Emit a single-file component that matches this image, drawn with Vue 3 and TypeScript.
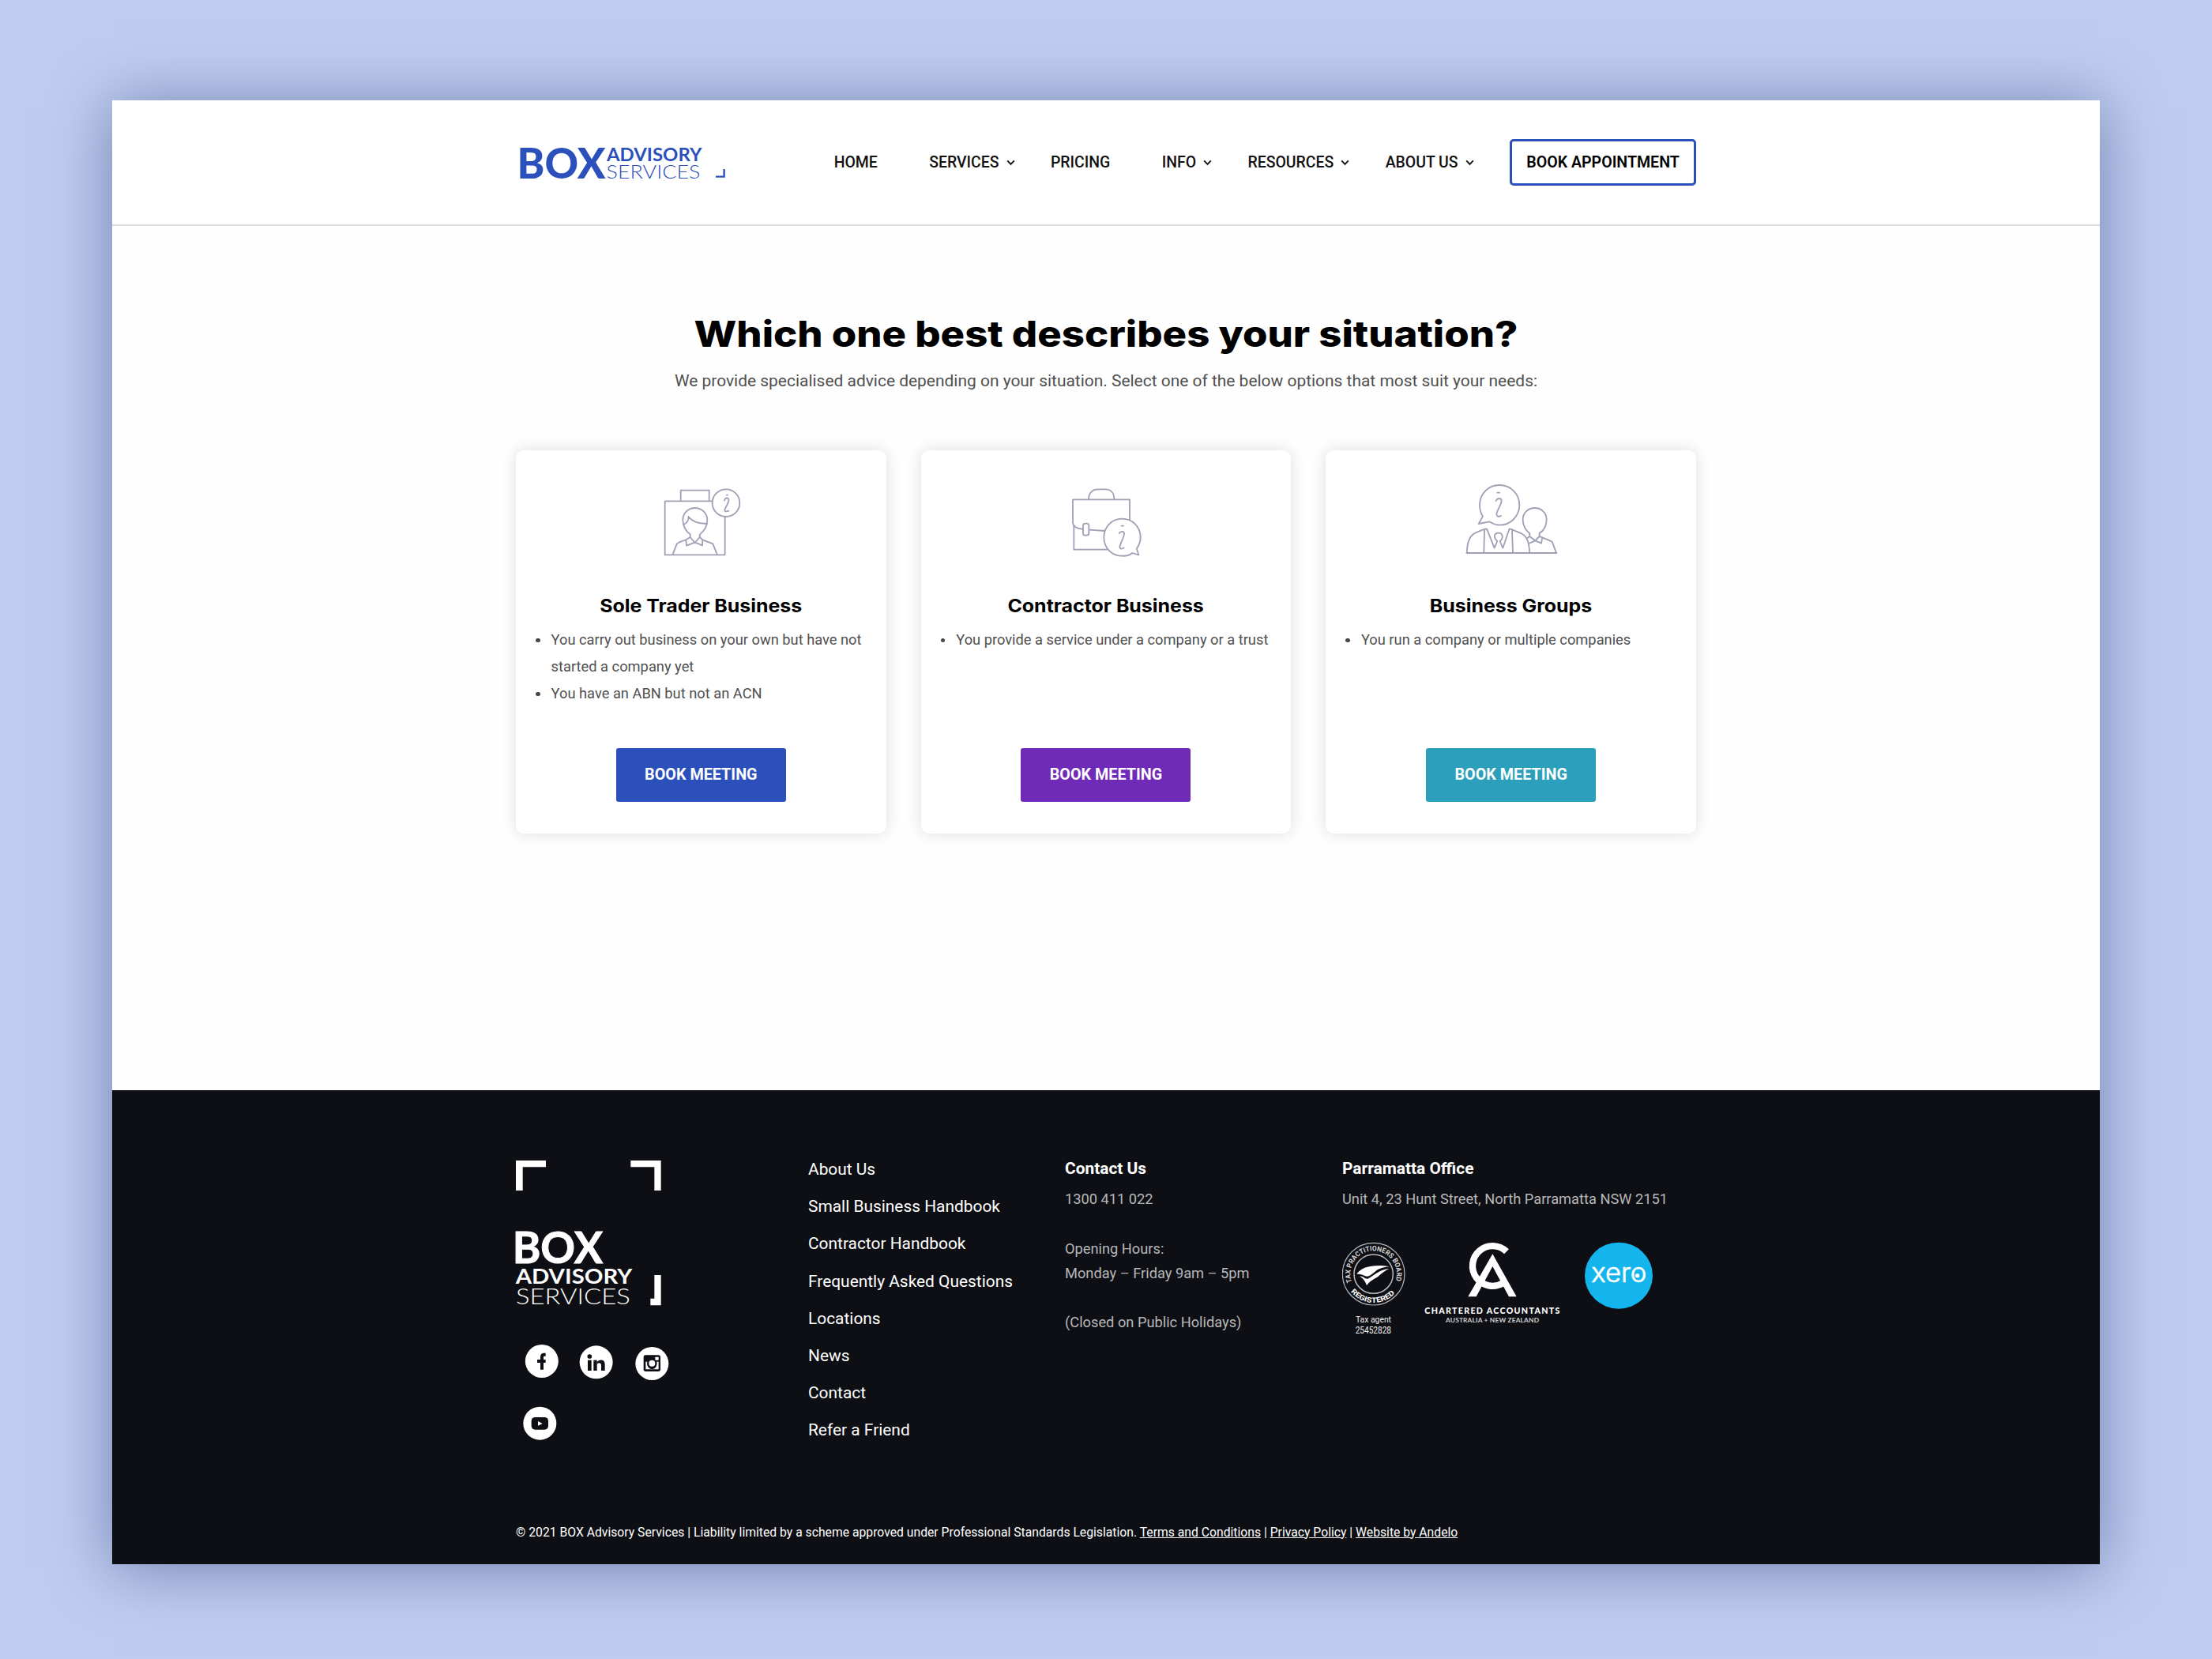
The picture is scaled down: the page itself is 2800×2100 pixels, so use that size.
<script setup lang="ts">
interface NavItem { label: string; menu: boolean }
interface Card { kind: 'sole' | 'contractor' | 'group'; title: string; points: string[]; viewBox: string }

const nav: NavItem[] = [
  { label: 'HOME', menu: false },
  { label: 'SERVICES', menu: true },
  { label: 'PRICING', menu: false },
  { label: 'INFO', menu: true },
  { label: 'RESOURCES', menu: true },
  { label: 'ABOUT US', menu: true },
]

const cards: Card[] = [
  {
    kind: 'sole',
    title: 'Sole Trader Business',
    points: ['You carry out business on your own but have not started a company yet', 'You have an ABN but not an ACN'],
    viewBox: '561 180 360 300',
  },
  {
    kind: 'contractor',
    title: 'Contractor Business',
    points: ['You provide a service under a company or a trust'],
    viewBox: '570 180 360 300',
  },
  {
    kind: 'group',
    title: 'Business Groups',
    points: ['You run a company or multiple companies'],
    viewBox: '579 180 360 300',
  },
]

const links: string[] = [
  'About Us',
  'Small Business Handbook',
  'Contractor Handbook',
  'Frequently Asked Questions',
  'Locations',
  'News',
  'Contact',
  'Refer a Friend',
]
</script>

<template>
  <div class="backdrop">
    <div class="page">
      <header class="header">
        <div class="wrap header-row">
          <svg class="logo" viewBox="0 0 270 50" fill="#2c50bb">
            <text x="1.5" y="44.8" font-size="52.500" font-weight="900" textLength="112" lengthAdjust="spacingAndGlyphs">BOX</text>
            <text x="115" y="23" font-size="22.6" font-weight="700" textLength="120.5" lengthAdjust="spacingAndGlyphs">ADVISORY</text>
            <text x="114.5" y="44.8" font-size="23" font-weight="300" textLength="119" lengthAdjust="spacingAndGlyphs">SERVICES</text>
            <path d="M253 42.6H263.6V33" fill="none" stroke="#2c50bb" stroke-width="2.4" />
          </svg>
          <nav class="nav">
            <a v-for="item in nav" :key="item.label" class="nav-link">
              {{ item.label }}
              <svg class="chevron" viewBox="0 0 11 8">
                <path v-if="item.menu" d="M1.2 1.4L5.5 5.8L9.8 1.4" fill="none" stroke="#111" stroke-width="1.9" />
              </svg>
            </a>
            <a class="appointment">BOOK APPOINTMENT</a>
          </nav>
        </div>
      </header>

      <main class="wrap main">
        <h1 class="heading">Which one best describes your situation?</h1>
        <p class="sub">We provide specialised advice depending on your situation. Select one of the below options that most suit your needs:</p>
        <div class="cards">
          <section v-for="card in cards" :key="card.kind" class="card">
            <svg class="card-icon" :viewBox="card.viewBox" fill="none" stroke="#9fa0b5" stroke-width="5.4" stroke-linejoin="round" stroke-linecap="round">
              <g v-if="card.kind === 'sole'">
                <path d="M665 252V212H773V252" />
                <path d="M785 253H605V457H833V313" />
                <circle cx="837" cy="260" r="52" />
                <path d="M840 230h3M831 251C832 240 850 236 847 252C845 262 836 276 832 286C830 294 840 293 847 290" />
                <path d="M719 279C745 279 766 299 766 325C766 350 751 369 737 380V390L719 411L701 390V379C686 369 673 348 673 325C673 299 693 279 719 279Z" />
                <path d="M677 341C688 338 697 325 694 312C710 332 735 339 764 339" />
                <path d="M701 390L685 400L687 422L719 410L747 421L748 400L737 390" />
                <path d="M685 400C668 405 654 411 650 416L635 455M748 400L787 415L803 455" />
              </g>
              <g v-else-if="card.kind === 'contractor'">
                <path d="M684 246C684 221 700 208 718 208H748C768 208 781 222 781 246" />
                <path d="M840 323V247H624V335C626 352 645 359 661 359M687 362L745 366" />
                <rect x="663" y="338" width="22" height="45" rx="8" />
                <path d="M628 347V437H756" />
                <path d="M850 450C838 460 825 462 811 461C771 461 742 430 742 390C742 350 773 320 811 320C850 320 881 350 881 390C881 408 875 422 866 433L874 457Z" />
                <path d="M809 347H816M800 375C806 366 820 366 819 378C817 395 803 415 802 427C802 436 812 435 818 430" />
              </g>
              <g v-else>
                <path d="M676 331C690 340 700 344 714 344C757 344 790 310 790 268C790 225 757 192 714 192C672 192 639 225 639 268C639 285 643 298 651 311L635 339Z" />
                <path d="M706 221H714M701 252C706 240 722 240 722 252C722 265 704 290 703 303C703 312 712 313 720 309" />
                <path d="M591 450V437C593 405 602 388 615 378C625 371 640 366 656 360L666 358L695 431L706 405C690 392 694 374 710 374C727 374 731 392 716 405L727 431L752 358L762 361L800 377C820 388 828 415 828 450" />
                <path d="M657 362L655 450M762 362L765 450M589 450H931" />
                <path d="M829 376C812 362 803 345 803 323C803 298 823 279 848 279C873 279 893 298 893 323C893 345 882 365 866 375" />
                <path d="M829 376V387L850 403L866 387V375M829 387L819 394M828 413L850 403L873 413L877 391L866 387M877 391L914 407L930 450" />
              </g>
            </svg>
            <h2 class="card-title">{{ card.title }}</h2>
            <ul class="points">
              <li v-for="point in card.points" :key="point">{{ point }}</li>
            </ul>
            <a class="book" :class="card.kind">BOOK MEETING</a>
          </section>
        </div>
      </main>

      <footer class="footer">
        <div class="wrap footer-cols">
          <div>
            <svg class="footer-logo" viewBox="69 87 552 552" fill="#fff">
              <path d="M69 87H183V112H95V201H69ZM505 87H620V201H595V112H505ZM595 522H620V637H580V611H595Z" />
              <text x="56" y="477" font-size="164" font-weight="700" textLength="343" lengthAdjust="spacingAndGlyphs" stroke="#fff" stroke-width="3">BOX</text>
              <text x="68" y="554" font-size="80" font-weight="700" textLength="443" lengthAdjust="spacingAndGlyphs">ADVISORY</text>
              <text x="69" y="632" font-size="82" font-weight="300" textLength="434" lengthAdjust="spacingAndGlyphs">SERVICES</text>
            </svg>
            <svg class="social" viewBox="69 780 600 375">
              <g fill="#fff">
                <circle cx="167.500" cy="849" r="63" />
                <circle cx="374" cy="853" r="63" />
                <circle cx="586" cy="858" r="63" />
                <circle cx="160" cy="1085" r="63" />
              </g>
              <path d="M182 824H176Q168 824 168 833V881M150 849H182" fill="none" stroke="#0e0f14" stroke-width="12" />
              <g fill="#0e0f14">
                <circle cx="349" cy="831" r="8.500" />
                <rect x="342" y="845" width="14" height="40" />
                <rect x="364" y="845" width="13" height="40" />
                <path d="M377 852C386 840 407 841 407 861V885H393V864C393 853 377 853 377 864Z" />
                <rect x="554" y="826" width="64" height="62" rx="8" />
                <rect x="128" y="1062" width="64" height="47" rx="14" />
              </g>
              <g fill="#fff">
                <path d="M562 851H569V866C571 872 577 879 586 879C595 879 601 873 603 866V851H611V880H562Z" />
                <circle cx="586" cy="857" r="19" fill="#0e0f14" />
                <circle cx="586" cy="857" r="12" />
                <rect x="598" y="833" width="13" height="12" rx="2" />
                <path d="M153 1077L170 1086L153 1094Z" />
              </g>
            </svg>
          </div>

          <ul class="links">
            <li v-for="link in links" :key="link">{{ link }}</li>
          </ul>

          <div class="info">
            <h3>Contact Us</h3>
            <p>1300 411 022</p>
            <p class="spaced">Opening Hours:<br />Monday – Friday 9am – 5pm</p>
            <p class="spaced">(Closed on Public Holidays)</p>
          </div>

          <div class="info">
            <h3>Parramatta Office</h3>
            <p>Unit 4, 23 Hunt Street, North Parramatta NSW 2151</p>
            <svg class="badges" viewBox="57 398 1191 360">
              <defs>
                <path id="ring-top" d="M93.700 551A88 88 0 1 1 258.300 551" />
                <path id="ring-bottom" d="M74 560A110 110 0 0 0 278 560" />
              </defs>
              <g fill="none" stroke="#b9babd">
                <circle cx="176" cy="520" r="118" stroke-width="3.500" />
                <circle cx="176" cy="520" r="74" stroke-width="4.500" />
              </g>
              <g fill="#d5d5d7" font-size="27" font-weight="700" class="ring">
                <text><textPath href="#ring-top" textLength="334" lengthAdjust="spacingAndGlyphs">TAX PRACTITIONERS BOARD</textPath></text>
                <text fill="#fff"><textPath href="#ring-bottom" startOffset="12%" textLength="190" lengthAdjust="spacingAndGlyphs">REGISTERED</textPath></text>
              </g>
              <g fill="#fff">
                <path d="M112 520C132 489 185 482 237 492C212 494 196 500 184 509C172 519 162 529 151 529C142 528 134 519 112 520Z" />
                <path d="M124 529C137 527 143 540 154 538C172 531 190 505 236 499C214 510 205 519 192 531C178 540 166 543 150 563C144 548 138 537 124 529Z" />
              </g>
              <g fill="#f2f2f2" class="agent">
                <text x="108" y="704" font-size="35" textLength="135" lengthAdjust="spacingAndGlyphs">Tax agent</text>
                <text x="107" y="746" font-size="36" textLength="136" lengthAdjust="spacingAndGlyphs">25452828</text>
              </g>

              <path d="M681 435A76 76 0 1 0 668 554" fill="none" stroke="#fff" stroke-width="25" />
              <path d="M628 444L719 606H690L628 491L566 606H535Z" fill="#fff" />
              <text x="370" y="670" font-size="32" font-weight="900" fill="#fff" textLength="513" lengthAdjust="spacing">CHARTERED ACCOUNTANTS</text>
              <text x="450" y="704" font-size="25" font-weight="700" fill="#d0d0d2" textLength="354" lengthAdjust="spacing">AUSTRALIA + NEW ZEALAND</text>

              <ellipse cx="1107" cy="526" rx="129" ry="126" fill="#14b4ec" />
              <text x="1003" y="552" class="xero" font-size="100" font-weight="300" fill="#fff" stroke="#fff" stroke-width="2" textLength="210" lengthAdjust="spacingAndGlyphs">xero</text>
              <circle cx="1178" cy="526" r="8" fill="#fff" />
            </svg>
          </div>
        </div>
        <p class="wrap legal">© 2021 BOX Advisory Services | Liability limited by a scheme approved under Professional Standards Legislation. <a>Terms and Conditions</a> | <a>Privacy Policy</a> | <a>Website by Andelo</a></p>
      </footer>
    </div>
  </div>
</template>

<style>
body {
  margin: 0;
  background: #c0cdf0;
}
</style>

<style scoped>
.backdrop {
  box-sizing: border-box;
  width: 2800px;
  height: 2100px;
  padding: 127px 142px 120px;
  background: #c0cdf0;
  font-family: Roboto, "Liberation Sans", sans-serif;
  overflow: hidden;
}
.page {
  display: flex;
  flex-direction: column;
  width: 2516px;
  height: 1853px;
  background: #fefefe;
  box-shadow: 0 5px 75px rgba(38, 52, 112, 0.5);
}
.wrap {
  box-sizing: border-box;
  width: 1494px;
  margin: 0 auto;
}
.header {
  height: 157px;
  border-bottom: 2px solid #dedede;
  background: #fff;
}
.header-row {
  display: flex;
  justify-content: space-between;
  align-items: center;
  height: 157px;
}
.logo {
  width: 270px;
  height: 50px;
  overflow: visible;
}
svg text {
  font-family: Lato, "Liberation Sans", sans-serif;
}
.ring text,
.agent text {
  font-family: Roboto, "Liberation Sans", sans-serif;
}
svg .xero {
  font-family: Inter, "Liberation Sans", sans-serif;
}
.nav {
  display: flex;
  align-items: center;
  gap: 45.4px;
}
.nav-link {
  display: flex;
  align-items: center;
  gap: 9px;
  font-size: 19.45px;
  font-weight: 500;
  line-height: 24px;
  color: #111;
}
.chevron {
  width: 11px;
  height: 8px;
}
.appointment {
  box-sizing: border-box;
  width: 236px;
  height: 59px;
  border: 3px solid #2c50bb;
  border-radius: 5px;
  font-size: 19.6px;
  font-weight: 600;
  line-height: 53px;
  text-align: center;
  color: #000;
}
.main {
  flex: none;
  height: 1094px;
  padding-top: 106.5px;
}
.heading {
  margin: 0;
  font-family: Inter, "Liberation Sans", sans-serif;
  font-size: 45px;
  font-weight: 800;
  line-height: 60px;
  text-align: center;
  color: #000;
  transform: scaleX(1.13);
}
.sub {
  margin: 12.5px 0 0;
  font-size: 20.95px;
  line-height: 34px;
  text-align: center;
  color: #505050;
}
.cards {
  display: grid;
  grid-template-columns: repeat(3, 1fr);
  gap: 44px;
  margin-top: 71px;
}
.card {
  box-sizing: border-box;
  display: flex;
  flex-direction: column;
  align-items: center;
  height: 485px;
  padding: 40px 24px;
  border-radius: 10px;
  background: #fff;
  box-shadow: 0 0 20px rgba(0, 0, 0, 0.13);
}
.card-icon {
  flex: none;
  width: 120px;
  height: 100px;
}
.card-title {
  margin: 40.5px 0 0;
  font-family: Inter, "Liberation Sans", sans-serif;
  font-size: 23.4px;
  font-weight: 700;
  line-height: 32px;
  color: #000;
  transform: scaleX(1.065);
}
.points {
  align-self: stretch;
  margin: 10.5px -5px 0 0;
  padding-left: 1px;
  list-style: none;
  font-size: 18.3px;
  line-height: 34.1px;
  color: #505050;
}
.points li {
  display: flex;
}
.points li::before {
  content: "";
  flex: none;
  width: 5.6px;
  height: 5.6px;
  margin: 14.6px 14px 0 0;
  border-radius: 50%;
  background: #484848;
}
.book {
  width: 215px;
  height: 68px;
  margin-top: auto;
  border-radius: 3px;
  font-size: 19.75px;
  font-weight: 700;
  line-height: 67px;
  text-align: center;
  color: #fff;
}
.book.sole { background: #2c50bb; }
.book.contractor { background: #702ab8; }
.book.group { background: #2b9fbb; }

.footer {
  display: flex;
  flex-direction: column;
  flex: 1;
  background: #0e0f14;
  color: #fff;
}
.footer-cols {
  display: grid;
  grid-template-columns: 370px 325px 351px 1fr;
  padding-top: 89px;
}
.footer-logo {
  display: block;
  width: 184px;
  height: 184px;
  overflow: visible;
}
.social {
  display: block;
  width: 200px;
  height: 125px;
  margin-top: 47px;
}
.links {
  margin: -12px 0 0;
  padding: 0;
  list-style: none;
  font-size: 20.9px;
  line-height: 47.17px;
}
.info h3 {
  margin: -5.5px 0 0;
  font-size: 20.9px;
  font-weight: 700;
  line-height: 31.4px;
}
.info p {
  margin: 7.5px 0 0;
  font-size: 18.25px;
  line-height: 31.2px;
  color: #b7b7b9;
}
.info p.spaced {
  margin-top: 31px;
}
.badges {
  display: block;
  width: 397px;
  height: 120px;
  margin-top: 38.5px;
}
.legal {
  margin-top: auto;
  margin-bottom: 28.5px;
  font-size: 15.725px;
  line-height: 24px;
}
.legal a {
  text-decoration: underline;
}
</style>
